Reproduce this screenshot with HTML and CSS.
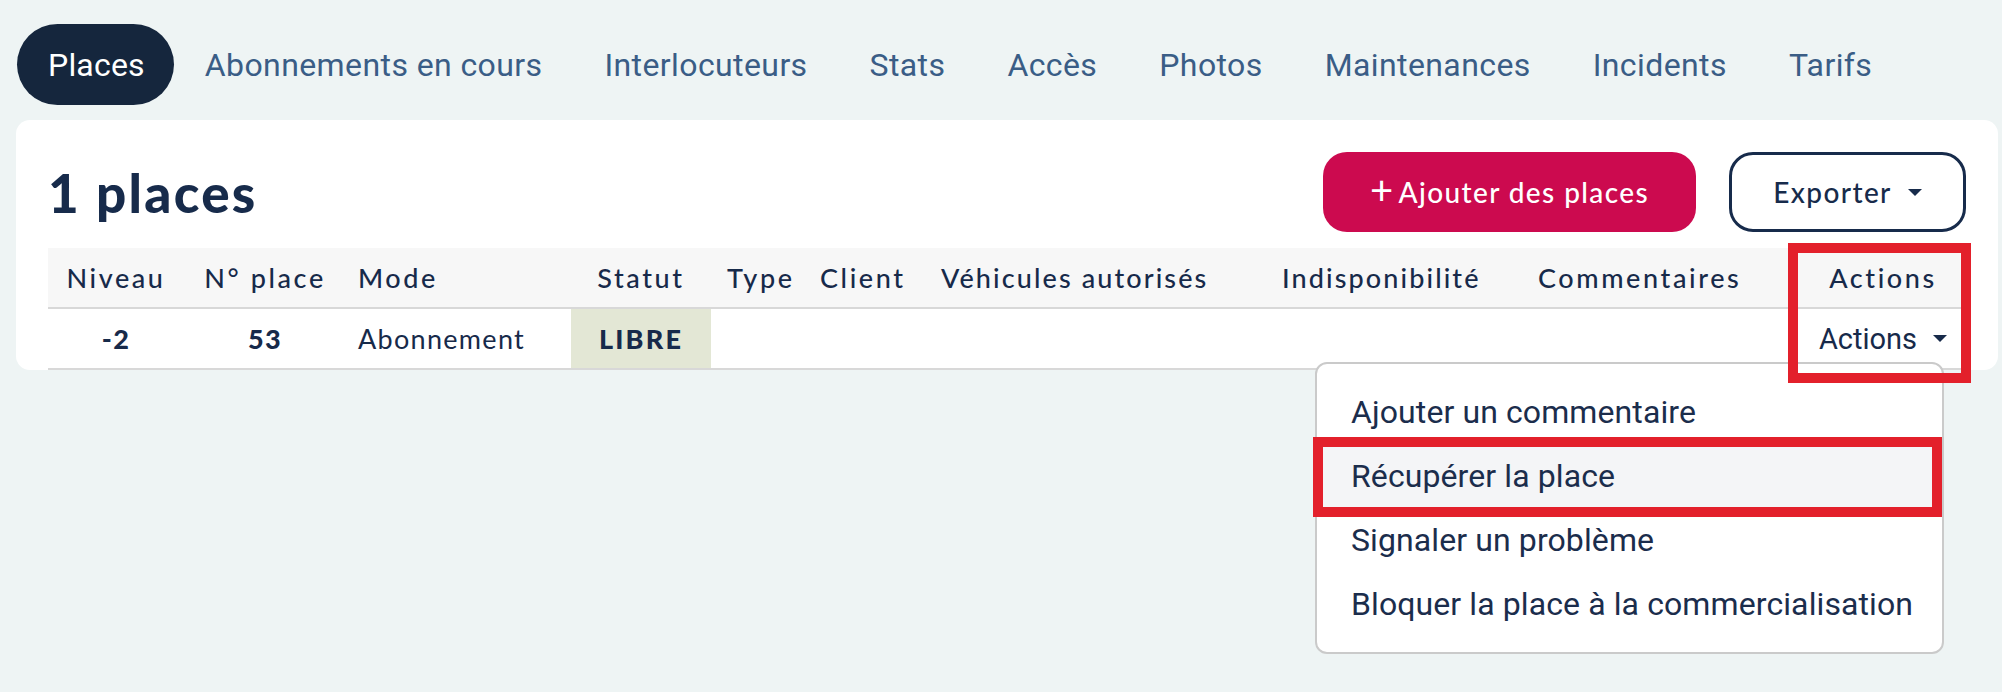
FILE: index.html
```html
<!DOCTYPE html>
<html lang="fr">
<head>
<meta charset="utf-8">
<title>Places</title>
<link rel="stylesheet" href="styles.css">
</head>
<body>
<nav class="tabs">
  <a class="tab active">Places</a>
  <a class="tab">Abonnements en cours</a>
  <a class="tab">Interlocuteurs</a>
  <a class="tab">Stats</a>
  <a class="tab">Accès</a>
  <a class="tab">Photos</a>
  <a class="tab">Maintenances</a>
  <a class="tab">Incidents</a>
  <a class="tab">Tarifs</a>
</nav>

<section class="card">
  <header class="card-head">
    <h1 class="title">1 places</h1>
    <div class="btns">
      <button class="btn btn-primary"><span class="plus">+</span>Ajouter des places</button>
      <button class="btn btn-outline">Exporter<span class="caret"></span></button>
    </div>
  </header>

  <div class="table">
    <div class="row head">
      <div class="cell c">Niveau</div>
      <div class="cell c">N° place</div>
      <div class="cell">Mode</div>
      <div class="cell c">Statut</div>
      <div class="cell type">Type</div>
      <div class="cell">Client</div>
      <div class="cell narrow">Véhicules autorisés</div>
      <div class="cell narrow">Indisponibilité</div>
      <div class="cell">Commentaires</div>
      <div class="cell c">Actions</div>
    </div>
    <div class="row body">
      <div class="cell c strong">-2</div>
      <div class="cell c strong">53</div>
      <div class="cell">Abonnement</div>
      <div class="cell c strong status">LIBRE</div>
      <div class="cell type"></div>
      <div class="cell"></div>
      <div class="cell"></div>
      <div class="cell"></div>
      <div class="cell"></div>
      <div class="cell c"><span class="actions-btn">Actions<span class="caret"></span></span></div>
    </div>
  </div>
</section>

<ul class="menu">
  <li class="menu-item">Ajouter un commentaire</li>
  <li class="menu-item hover">Récupérer la place</li>
  <li class="menu-item">Signaler un problème</li>
  <li class="menu-item">Bloquer la place à la commercialisation</li>
</ul>

<div class="mark mark-actions"></div>
<div class="mark mark-item"></div>
</body>
</html>
```

FILE: styles.css
```css
* { box-sizing: border-box; }

html, body {
  margin: 0;
  padding: 0;
}

body {
  position: relative;
  width: 2002px;
  height: 692px;
  overflow: hidden;
  background: #eef4f4;
  font-family: "Lato", "Liberation Sans", sans-serif;
  color: #172a4a;
}

/* Tabs */
.tabs {
  display: flex;
  padding: 24px 0 0 17px;
}

.tab {
  display: flex;
  align-items: center;
  height: 81px;
  padding: 0 31px;
  border-radius: 41px;
  font-family: "Roboto", "Liberation Sans", sans-serif;
  font-size: 32px;
  letter-spacing: 0.4px;
  color: #3a5d86;
  white-space: nowrap;
}

.tab.active {
  background: #15263d;
  color: #ffffff;
  padding: 0 29px 0 31px;
  letter-spacing: 0.2px;
}

/* Card */
.card {
  margin: 15px 0 0 16px;
  width: 1982px;
  background: #ffffff;
  border-radius: 14px;
  padding: 0 32px;
}

.card-head {
  display: flex;
  align-items: center;
  justify-content: space-between;
  padding: 32px 0 16px;
}

.title {
  margin: 0;
  font-size: 53px;
  font-weight: 900;
  color: #172b4b;
  letter-spacing: 2.3px;
}

.btns {
  display: flex;
  gap: 33px;
}

.btn {
  height: 80px;
  border-radius: 24px;
  font-family: "Lato", "Liberation Sans", sans-serif;
  font-size: 28px;
  font-weight: 500;
  letter-spacing: 1.4px;
  display: flex;
  align-items: center;
  justify-content: center;
  cursor: pointer;
}

.btn-primary {
  width: 373px;
  background: #cc0a4f;
  border: none;
  color: #ffffff;
}

.plus {
  font-size: 40px;
  font-weight: 400;
  margin-right: 4px;
  line-height: 1;
  position: relative;
  top: -2px;
}

.btn-outline {
  width: 237px;
  background: #ffffff;
  border: 3px solid #172b4b;
  color: #172b4b;
}

.caret {
  display: inline-block;
  width: 0;
  height: 0;
  border-left: 7px solid transparent;
  border-right: 7px solid transparent;
  border-top: 7px solid currentColor;
  margin-left: 16px;
  vertical-align: middle;
}

/* Table */
.table {
  width: 1918px;
}

.row {
  display: grid;
  grid-template-columns: 136px 162px 225px 140px 97px 121px 341px 256px 274px 166px;
  height: 61px;
  border-bottom: 2px solid #d8d8d8;
}

.row.head {
  background: #f7f7f7;
  font-weight: 500;
  font-size: 27px;
  letter-spacing: 2.6px;
}

.row.head .narrow {
  letter-spacing: 2.1px;
}

.row.body {
  font-size: 27px;
  letter-spacing: 1.3px;
}

.cell {
  display: flex;
  align-items: center;
  padding: 0 12px;
  white-space: nowrap;
}

.cell.c {
  justify-content: center;
}

.cell.type {
  padding-left: 16px;
}

.strong {
  font-weight: 900;
}

.status {
  background: #e3e7d5;
  letter-spacing: 2.2px;
}

.actions-btn {
  font-family: "Roboto", "Liberation Sans", sans-serif;
  font-size: 29px;
  letter-spacing: 0;
  color: #172a4a;
  display: flex;
  align-items: center;
}

/* Dropdown menu */
.menu {
  position: absolute;
  left: 1315px;
  top: 362px;
  width: 629px;
  margin: 0;
  padding: 16px 0;
  list-style: none;
  background: #ffffff;
  border: 2px solid #cacaca;
  border-radius: 12px;
}

.menu-item {
  height: 64px;
  display: flex;
  align-items: center;
  padding-left: 34px;
  font-family: "Roboto", "Liberation Sans", sans-serif;
  font-size: 32px;
  letter-spacing: 0.1px;
  color: #1b2d4c;
  white-space: nowrap;
}

.menu-item.hover {
  background: #f4f5f7;
}

/* Red annotation boxes */
.mark {
  position: absolute;
  border: 10px solid #e3202b;
}

.mark-actions {
  left: 1788px;
  top: 243px;
  width: 183px;
  height: 140px;
}

.mark-item {
  left: 1313px;
  top: 437px;
  width: 629px;
  height: 80px;
}
```
